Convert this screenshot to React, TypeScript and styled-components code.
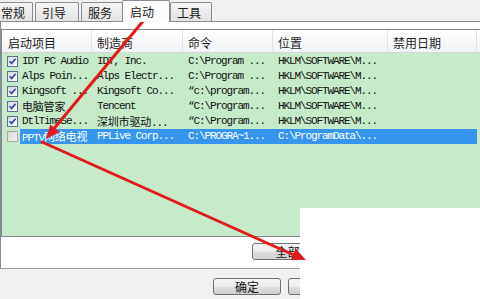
import React from 'react';
import styled, { createGlobalStyle } from 'styled-components';

const Global = createGlobalStyle`
  html, body { margin: 0; padding: 0; background: #f0f0f0; }
  #root { width: 480px; height: 299px; }
`;

const Window = styled.div`
  position: relative;
  width: 480px;
  height: 299px;
  overflow: hidden;
  background: #f0f0f0;
  display: flex;
  flex-direction: column;
  font-family: "Noto Sans CJK SC", "Liberation Sans", sans-serif;
`;

const TabStrip = styled.div`
  flex: none;
  height: 22px;
  margin-bottom: -1px;
  display: flex;
  align-items: flex-end;
  position: relative;
  z-index: 1;
`;

const Tab = styled.div<{ $active?: boolean; $w: number; $ml: number }>`
  box-sizing: border-box;
  flex: none;
  width: ${p => p.$w}px;
  margin-left: ${p => p.$ml}px;
  height: ${p => (p.$active ? 22 : 19)}px;
  margin-bottom: ${p => (p.$active ? 0 : 1)}px;
  padding: ${p => (p.$active ? '5px 0 0 7px' : '4px 0 0 6px')};
  border: 1px solid #898c95;
  border-bottom: none;
  border-radius: 2px 2px 0 0;
  background: ${p => (p.$active ? '#fcfcfc' : 'linear-gradient(#f4f4f4, #e2e2e2)')};
  font-size: 12px;
  line-height: 12px;
  color: #1a1a1a;
  white-space: nowrap;
`;

const Panel = styled.div`
  flex: none;
  height: 248px;
  box-sizing: border-box;
  background: #ffffff;
  border-top: 1px solid #898c95;
  border-bottom: 1px solid #a0a0a0;
  border-left: 1px solid #898c95;
  padding-top: 7px;
  display: flex;
  flex-direction: column;
`;

const ListView = styled.div`
  flex: none;
  height: 208px;
  box-sizing: border-box;
  border: 1px solid #828790;
  border-right: none;
  background: #c7eacb;
  display: flex;
  flex-direction: column;
  overflow: hidden;
`;

const COLS = '90px 91px 90px 115px 89px 1fr';

const HeaderRow = styled.div`
  flex: none;
  height: 23px;
  box-sizing: border-box;
  display: grid;
  grid-template-columns: ${COLS};
  background: linear-gradient(#ffffff, #f2f3f5);
  border-bottom: 1px solid #d5d5d5;
`;

const HeaderCell = styled.div<{ $pad?: number }>`
  padding: 3px 0 0 ${p => p.$pad ?? 5}px;
  border-right: 1px solid #e2e3e4;
  font-size: 12px;
  line-height: 19px;
  color: #1e1e1e;
  white-space: nowrap;
  overflow: hidden;
`;

const Body = styled.div`
  padding-top: 1px;
  display: flex;
  flex-direction: column;
`;

const Row = styled.div`
  height: 15px;
  display: grid;
  grid-template-columns: ${COLS};
  font-family: "Liberation Mono", "Noto Sans CJK SC", monospace;
  font-size: 11px;
  line-height: 15px;
  letter-spacing: -1.1px;
  color: #111;
`;

const NameCell = styled.div`
  display: flex;
  align-items: center;
  padding-left: 5px;
  min-width: 0;
`;

const NameLabel = styled.span<{ $sel?: boolean }>`
  flex: 1;
  margin-left: 2px;
  padding-left: 2px;
  height: 15px;
  white-space: nowrap;
  overflow: hidden;
  background: ${p => (p.$sel ? '#3795ee' : 'transparent')};
  color: ${p => (p.$sel ? '#ffffff' : 'inherit')};
`;

const Cell = styled.div<{ $sel?: boolean }>`
  padding-left: 5px;
  white-space: nowrap;
  overflow: hidden;
  background: ${p => (p.$sel ? '#3795ee' : 'transparent')};
  color: ${p => (p.$sel ? '#ffffff' : 'inherit')};
`;

const Cjk = styled.span`
  font-family: "Noto Sans CJK SC", sans-serif;
  font-size: 11px;
  letter-spacing: -0.2px;
`;

const Check = styled.span<{ $on: boolean }>`
  flex: none;
  width: 11px;
  height: 11px;
  box-sizing: border-box;
  border: 1px solid ${p => (p.$on ? '#5d7293' : '#a9a9a9')};
  background: ${p => (p.$on ? 'linear-gradient(135deg, #d8d8d8, #ffffff)' : 'linear-gradient(135deg, #dadada, #f2f2f2)')};
  display: flex;
  align-items: center;
  justify-content: center;
`;

const PanelActions = styled.div`
  display: flex;
  justify-content: flex-end;
  gap: 6px;
  padding-right: 2px;
  margin-top: 6px;
`;

const Footer = styled.div`
  flex: 1;
  display: flex;
  justify-content: flex-end;
  align-items: flex-start;
  gap: 7px;
  padding: 9px 49px 0 0;
`;

const Button = styled.button<{ $w: number }>`
  flex: none;
  width: ${p => p.$w}px;
  height: 17px;
  box-sizing: border-box;
  padding: 0;
  border: 1px solid #707070;
  border-radius: 3px;
  background: linear-gradient(#f4f4f4 0%, #ececec 50%, #dedede 51%, #d0d0d0 100%);
  font-family: "Noto Sans CJK SC", sans-serif;
  font-size: 12px;
  line-height: 15px;
  color: #111;
`;

const Cover = styled.div`
  position: absolute;
  left: 300px;
  top: 208px;
  width: 180px;
  height: 91px;
  background: #ffffff;
`;

const Arrows = styled.svg`
  position: absolute;
  left: 0;
  top: 0;
  width: 480px;
  height: 299px;
  pointer-events: none;
`;

const tabs = [
  { label: '常规', w: 39, ml: -6 },
  { label: '引导', w: 44, ml: 2 },
  { label: '服务', w: 42, ml: 2 },
  { label: '启动', w: 48, ml: -1, active: true },
  { label: '工具', w: 42, ml: 0 },
];

const headers = ['启动项目', '制造商', '命令', '位置', '禁用日期', ''];

const rows = [
  { on: true, name: 'IDT PC Audio', maker: 'IDT, Inc.', cmd: 'C:\\Program ...', loc: 'HKLM\\SOFTWARE\\M...' },
  { on: true, name: 'Alps Poin...', maker: 'Alps Electr...', cmd: 'C:\\Program ...', loc: 'HKLM\\SOFTWARE\\M...' },
  { on: true, name: 'Kingsoft ...', maker: 'Kingsoft Co...', cmd: '“c:\\program...', loc: 'HKLM\\SOFTWARE\\M...' },
  { on: true, name: '电脑管家', maker: 'Tencent', cmd: '“C:\\Program...', loc: 'HKLM\\SOFTWARE\\M...' },
  { on: true, name: 'DtlTimeSe...', maker: '深圳市驱动...', cmd: '“C:\\Program...', loc: 'HKLM\\SOFTWARE\\M...' },
  { on: false, sel: true, name: 'PPTV网络电视', maker: 'PPLive Corp...', cmd: 'C:\\PROGRA~1...', loc: 'C:\\ProgramData\\...' },
];

const Mixed: React.FC<{ text: string }> = ({ text }) => (
  <>
    {text
      .split(/([\u3400-\u9fff]+)/)
      .filter(Boolean)
      .map((part, i) => (/[\u3400-\u9fff]/.test(part) ? <Cjk key={i}>{part}</Cjk> : <React.Fragment key={i}>{part}</React.Fragment>))}
  </>
);

const arrowHead = (tx: number, ty: number, sx: number, sy: number, len = 14, half = 6) => {
  const dx = tx - sx;
  const dy = ty - sy;
  const l = Math.hypot(dx, dy);
  const ux = dx / l;
  const uy = dy / l;
  const bx = tx - ux * len;
  const by = ty - uy * len;
  const px = -uy;
  const py = ux;
  return `${tx},${ty} ${bx + px * half},${by + py * half} ${bx - px * half},${by - py * half}`;
};

export default function App() {
  return (
    <>
      <Global />
      <Window>
        <TabStrip>
          {tabs.map(t => (
            <Tab key={t.label} $w={t.w} $ml={t.ml} $active={t.active}>
              {t.label}
            </Tab>
          ))}
        </TabStrip>
        <Panel>
          <ListView>
            <HeaderRow>
              {headers.map((h, i) => (
                <HeaderCell key={i} $pad={i === 0 ? 6 : 5}>
                  {h}
                </HeaderCell>
              ))}
            </HeaderRow>
            <Body>
              {rows.map((r, i) => (
                <Row key={i}>
                  <NameCell>
                    <Check $on={r.on}>
                      {r.on && (
                        <svg width="9" height="9" viewBox="0 0 9 9">
                          <path d="M1.6 4.2 L3.6 6.4 L7.6 1.8" fill="none" stroke="#3046b2" strokeWidth="1.7" />
                        </svg>
                      )}
                    </Check>
                    <NameLabel $sel={r.sel}>
                      <Mixed text={r.name} />
                    </NameLabel>
                  </NameCell>
                  <Cell $sel={r.sel}>
                    <Mixed text={r.maker} />
                  </Cell>
                  <Cell $sel={r.sel}>{r.cmd}</Cell>
                  <Cell $sel={r.sel}>{r.loc}</Cell>
                  <Cell $sel={r.sel} />
                  <Cell />
                </Row>
              ))}
            </Body>
          </ListView>
          <PanelActions>
            <Button $w={110}>全部启用(E)</Button>
            <Button $w={110}>全部禁用(D)</Button>
          </PanelActions>
        </Panel>
        <Footer>
          <Button $w={68}>确定</Button>
          <Button $w={68}>取消</Button>
          <Button $w={68}>应用(A)</Button>
        </Footer>
        <Cover />
        <Arrows viewBox="0 0 480 299">
          <line x1="144" y1="20" x2="52" y2="131" stroke="#e11b1b" strokeWidth="3" strokeLinecap="round" />
          <polygon points={arrowHead(46, 139, 144, 20)} fill="#e11b1b" />
          <line x1="42" y1="142" x2="296" y2="256" stroke="#e11b1b" strokeWidth="3" strokeLinecap="round" />
          <polygon points={arrowHead(306, 260, 42, 142)} fill="#e11b1b" />
        </Arrows>
      </Window>
    </>
  );
}
